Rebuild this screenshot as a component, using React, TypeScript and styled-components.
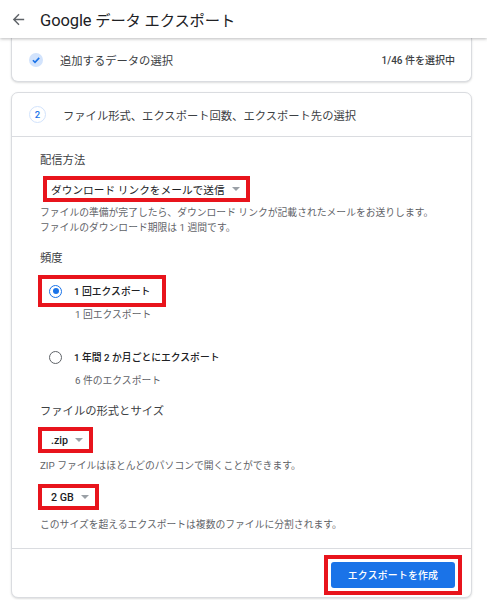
import * as React from "react";
import styled, { createGlobalStyle } from "styled-components";

const GlobalStyle = createGlobalStyle`
  body {
    margin: 0;
    background: #fff;
    font-family: Roboto, "Noto Sans CJK JP", sans-serif;
    color: #202124;
  }
`;

const mark = "#e8141c";

const Page = styled.div`
  width: 487px;
  height: 600px;
  overflow: hidden;
  display: flex;
  flex-direction: column;
  background: #fff;
`;

const TopBar = styled.header`
  position: relative;
  z-index: 1;
  height: 38px;
  flex-shrink: 0;
  display: flex;
  align-items: center;
  gap: 13px;
  padding-left: 10px;
  background: #fff;
  box-shadow: 0 1px 3px rgba(60, 64, 67, 0.35);
`;

const PageTitle = styled.h1`
  margin: 0 0 1px;
  font-size: 15.3px;
  font-weight: 400;
  color: #202124;
  letter-spacing: -0.1px;

  span {
    font-size: 16.5px;
  }
`;

const Body = styled.main`
  display: flex;
  flex-direction: column;
  gap: 10px;
  padding: 0 15px 0 11px;
`;

const Card = styled.section<{ $cut?: boolean }>`
  border: 1px solid #dadce0;
  border-radius: 7px;
  box-shadow: 0 1px 2px rgba(60, 64, 67, 0.18);
  background: #fff;
  ${(p) =>
    p.$cut &&
    `
    border-top: none;
    border-top-left-radius: 0;
    border-top-right-radius: 0;
  `}
`;

const StepRow = styled.div<{ $height: number }>`
  height: ${(p) => p.$height}px;
  display: flex;
  align-items: center;
  gap: 17px;
  padding: 0 16px 0 17px;
  font-size: 11.3px;
  color: #3c4043;
`;

const StepTitle = styled.div`
  flex: 1;
`;

const Count = styled.div`
  font-size: 10px;
  font-weight: 500;
  color: #3c4043;
`;

const StepNumber = styled.div`
  width: 17px;
  height: 17px;
  box-sizing: border-box;
  border-radius: 50%;
  border: 1px solid #d2e3fc;
  display: flex;
  align-items: center;
  justify-content: center;
  font-size: 9.5px;
  font-weight: 500;
  color: #1a73e8;
`;

const Divider = styled.hr`
  margin: 0;
  border: none;
  border-top: 1px solid #dadce0;
`;

const Content = styled.div`
  padding: 16px 27px 16px 28px;
  display: flex;
  flex-direction: column;
  align-items: flex-start;
`;

const Label = styled.div<{ $top?: number }>`
  margin-top: ${(p) => p.$top ?? 0}px;
  font-size: 11.3px;
  line-height: 16px;
  color: #3c4043;
`;

const Select = styled.div<{ $shift: number; $top: number; $weight: number }>`
  display: inline-flex;
  align-items: center;
  gap: 7px;
  height: 26px;
  box-sizing: border-box;
  margin: ${(p) => p.$top}px 0 0 ${(p) => p.$shift}px;
  padding: 0 6px 0 ${(p) => 7 - p.$shift}px;
  border: 4px solid ${mark};
  font-size: 10.7px;
  font-weight: ${(p) => p.$weight};
  color: #202124;
`;

const Caret = styled.span`
  width: 0;
  height: 0;
  border-left: 4px solid transparent;
  border-right: 4px solid transparent;
  border-top: 4px solid #9aa0a6;
`;

const Help = styled.div<{ $top: number }>`
  margin-top: ${(p) => p.$top}px;
  font-size: 9.8px;
  line-height: 15px;
  color: #5f6368;
`;

const Choice = styled.label<{ $marked?: boolean; $top: number }>`
  display: inline-flex;
  align-items: center;
  gap: 12px;
  height: 32px;
  box-sizing: border-box;
  margin: ${(p) => p.$top}px 0 0 -2px;
  padding: 0 12px 0 7px;
  border: 4px solid ${(p) => (p.$marked ? mark : "transparent")};
  font-size: 9.8px;
  font-weight: 500;
  color: #202124;
`;

const Radio = styled.span<{ $on?: boolean }>`
  width: 13px;
  height: 13px;
  box-sizing: border-box;
  border-radius: 50%;
  border: 1.5px solid ${(p) => (p.$on ? "#1a73e8" : "#5f6368")};
  display: flex;
  align-items: center;
  justify-content: center;

  &::after {
    content: "";
    width: 6px;
    height: 6px;
    border-radius: 50%;
    background: ${(p) => (p.$on ? "#1a73e8" : "transparent")};
  }
`;

const ChoiceNote = styled.div`
  padding-left: 35px;
  font-size: 9.8px;
  line-height: 15px;
  color: #5f6368;
`;

const Footer = styled.div`
  display: flex;
  justify-content: flex-end;
  padding: 6px 9px 2px 0;
`;

const ButtonMark = styled.div`
  padding: 3px;
  border: 4px solid ${mark};
`;

const Button = styled.button`
  width: 124px;
  height: 26px;
  border: none;
  border-radius: 3px;
  background: #1a73e8;
  color: #fff;
  font-family: inherit;
  font-size: 9.9px;
  font-weight: 500;
  letter-spacing: 0.2px;
`;

const BackArrow = () => (
  <svg width="17" height="17" viewBox="0 0 24 24" fill="#5f6368">
    <path d="M20 11H7.83l5.59-5.59L12 4l-8 8 8 8 1.41-1.41L7.83 13H20v-2z" />
  </svg>
);

const DoneIcon = () => (
  <svg width="14" height="14" viewBox="0 0 14 14">
    <circle cx="7" cy="7" r="7" fill="#d2e3fc" />
    <path d="M3.9 7.2l2.1 2.1 4.2-4.4" fill="none" stroke="#1a73e8" strokeWidth="1.6" />
  </svg>
);

const App = () => (
  <Page>
    <GlobalStyle />
    <TopBar>
      <BackArrow />
      <PageTitle>
        <span>Google</span> データ エクスポート
      </PageTitle>
    </TopBar>
    <Body>
      <Card $cut>
        <StepRow $height={43}>
          <DoneIcon />
          <StepTitle>追加するデータの選択</StepTitle>
          <Count>1/46 件を選択中</Count>
        </StepRow>
      </Card>
      <Card>
        <StepRow $height={43}>
          <StepNumber>2</StepNumber>
          <StepTitle>ファイル形式、エクスポート回数、エクスポート先の選択</StepTitle>
        </StepRow>
        <Divider />
        <Content>
          <Label>配信方法</Label>
          <Select $shift={3} $top={7} $weight={400}>
            ダウンロード リンクをメールで送信
            <Caret />
          </Select>
          <Help $top={3}>
            ファイルの準備が完了したら、ダウンロード リンクが記載されたメールをお送りします。
            <br />
            ファイルのダウンロード期限は 1 週間です。
          </Help>
          <Label $top={16}>頻度</Label>
          <Choice $marked $top={8}>
            <Radio $on />1 回エクスポート
          </Choice>
          <ChoiceNote>1 回エクスポート</ChoiceNote>
          <Choice $top={19}>
            <Radio />1 年間 2 か月ごとにエクスポート
          </Choice>
          <ChoiceNote>6 件のエクスポート</ChoiceNote>
          <Label $top={16}>ファイルの形式とサイズ</Label>
          <Select $shift={-2} $top={7} $weight={500}>
            .zip
            <Caret />
          </Select>
          <Help $top={5}>ZIP ファイルはほとんどのパソコンで開くことができます。</Help>
          <Select $shift={-2} $top={11} $weight={500}>
            2 GB
            <Caret />
          </Select>
          <Help $top={7}>このサイズを超えるエクスポートは複数のファイルに分割されます。</Help>
        </Content>
        <Divider />
        <Footer>
          <ButtonMark>
            <Button>エクスポートを作成</Button>
          </ButtonMark>
        </Footer>
      </Card>
    </Body>
  </Page>
);

export default App;
